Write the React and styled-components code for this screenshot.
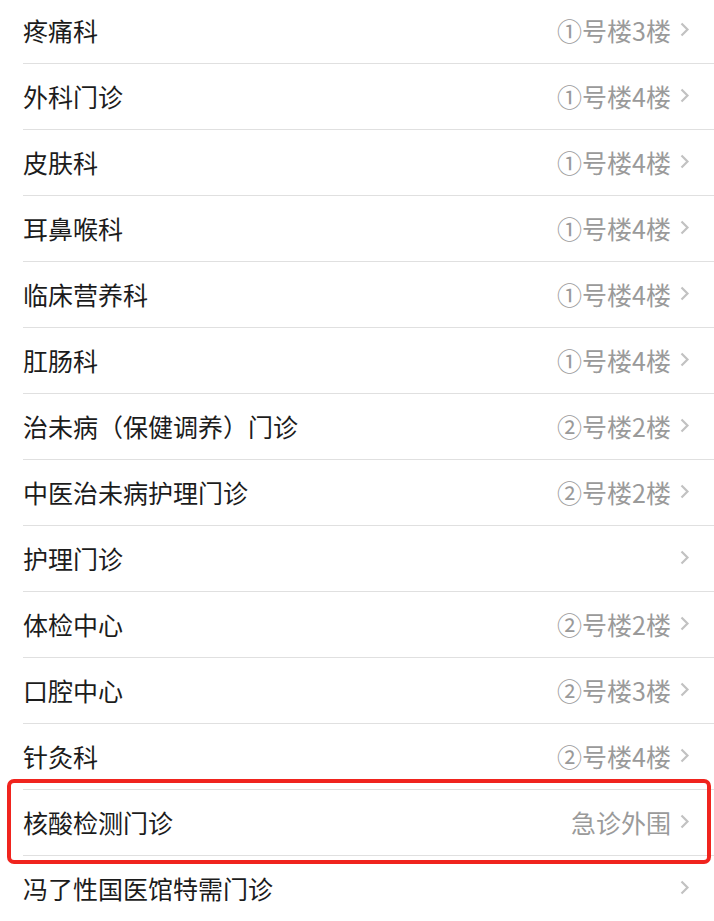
import React from 'react';
import styled, { createGlobalStyle } from 'styled-components';

const GlobalStyle = createGlobalStyle`
  html, body {
    margin: 0;
    padding: 0;
    background: #ffffff;
  }
  body {
    font-family: "Noto Sans CJK SC", "Noto Sans", sans-serif;
    overflow: hidden;
  }
`;

const departments = [
  { name: '疼痛科', place: '①号楼3楼' },
  { name: '外科门诊', place: '①号楼4楼' },
  { name: '皮肤科', place: '①号楼4楼' },
  { name: '耳鼻喉科', place: '①号楼4楼' },
  { name: '临床营养科', place: '①号楼4楼' },
  { name: '肛肠科', place: '①号楼4楼' },
  { name: '治未病（保健调养）门诊', place: '②号楼2楼' },
  { name: '中医治未病护理门诊', place: '②号楼2楼' },
  { name: '护理门诊', place: '' },
  { name: '体检中心', place: '②号楼2楼' },
  { name: '口腔中心', place: '②号楼3楼' },
  { name: '针灸科', place: '②号楼4楼' },
  { name: '核酸检测门诊', place: '急诊外围', marked: true },
  { name: '冯了性国医馆特需门诊', place: '' }
];

const StyledList = styled.ul`
  list-style: none;
  margin: -2px 0 0;
  padding: 0 0 0 23px;
`;

const StyledRow = styled.li`
  position: relative;
  display: flex;
  align-items: center;
  box-sizing: border-box;
  height: 66px;
  padding: 0 24px 2px 0;
  border-bottom: 1px solid #e0e0e0;
`;

const StyledName = styled.span`
  flex: 1;
  font-size: 25px;
  color: #1c1c1c;
  white-space: nowrap;
`;

const StyledPlace = styled.span`
  font-size: 25px;
  color: #9a9a9a;
  margin-right: 8px;
  white-space: nowrap;
`;

const StyledArrow = styled.svg`
  width: 11px;
  height: 17px;
  flex-shrink: 0;
`;

const StyledHighlight = styled.div`
  position: absolute;
  left: -16px;
  right: 3px;
  top: -11px;
  bottom: -9px;
  border: 4px solid #f0241e;
  border-radius: 7px;
  pointer-events: none;
`;

const Arrow = () => (
  <StyledArrow viewBox="0 0 11 17">
    <path d="M2.5 2.5 L8.5 8.5 L2.5 14.5" fill="none" stroke="#c2c2c2" strokeWidth="2.2" />
  </StyledArrow>
);

const App = () => {
  return (
    <>
      <GlobalStyle />
      <StyledList>
        {departments.map((item) => (
          <StyledRow key={item.name}>
            <StyledName>{item.name}</StyledName>
            {item.place && <StyledPlace>{item.place}</StyledPlace>}
            <Arrow />
            {item.marked && <StyledHighlight />}
          </StyledRow>
        ))}
      </StyledList>
    </>
  );
};

export default App;
